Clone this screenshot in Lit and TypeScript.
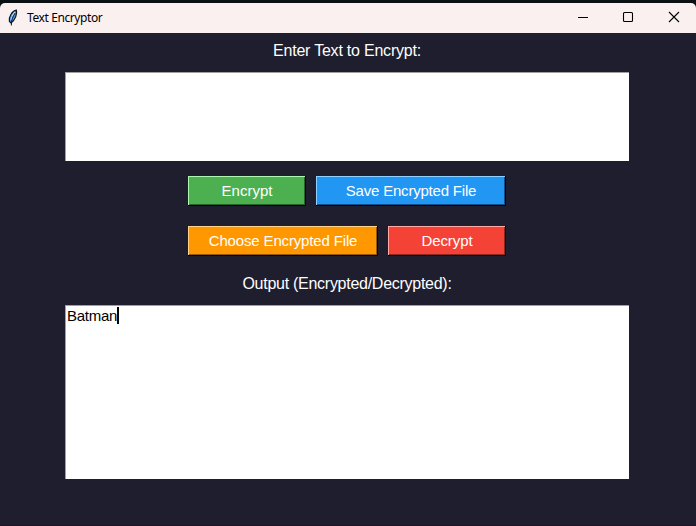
import { LitElement, html, css } from "lit";
import { customElement, property } from "lit/decorators.js";

@customElement("tk-titlebar")
class TkTitlebar extends LitElement {
  static styles = css`
    :host { display: flex; align-items: center; height: 30px; background: #faf0f0; border-radius: 5px 5px 0 0; color: #000; overflow: hidden; }
    .feather { width: 14px; height: 18px; margin-left: 6px; margin-bottom: 1px; }
    .name { flex: 1; margin-left: 7px; font: 12px/16px "Noto Sans", sans-serif; letter-spacing: -0.4px; }
    .controls { display: flex; height: 30px; margin-right: -1px; }
    .control { width: 46px; height: 28px; display: flex; justify-content: center; align-items: center; }
    .control.minimize { width: 44px; }
    .control svg { width: 12px; height: 12px; fill: none; stroke: #000; stroke-width: 1.1; }
  `;
  render() {
    return html`
      <svg class="feather" viewBox="0 0 14 18">
        <path d="M3.4 12.5C2.4 8 6 2 10.4 1.2C11.4 5 9.3 11 5 14Z" fill="#4e91dd" stroke="#101820" stroke-width="1.2" />
        <path d="M5 11C5.3 8 7 5 9 3" fill="none" stroke="#b7dcff" stroke-width="1.1" />
        <path d="M9.3 4C6.6 7.5 5.4 11 5.3 16.5" fill="none" stroke="#101820" stroke-width="1" />
      </svg>
      <span class="name">Text Encryptor</span>
      <div class="controls">
        <div class="control minimize"><svg viewBox="0 0 12 12"><path d="M1 6.5H11" /></svg></div>
        <div class="control"><svg viewBox="0 0 12 12"><rect x="1.5" y="1.5" width="9" height="9" rx="1" /></svg></div>
        <div class="control"><svg viewBox="0 0 12 12"><path d="M1 1L11 11M11 1L1 11" /></svg></div>
      </div>
    `;
  }
}

@customElement("tk-button")
class TkButton extends LitElement {
  @property({ reflect: true }) tone = "green";
  static styles = css`
    :host { --face: #4caf50; --light: #b0f5b2; --dark: #26672a; display: block; }
    :host([tone="blue"]) { --face: #2196f3; --light: #90d0ff; --dark: #11518b; letter-spacing: -0.2px; }
    :host([tone="orange"]) { --face: #ff9800; --light: #ffd38a; --dark: #965700; letter-spacing: -0.15px; }
    :host([tone="red"]) { --face: #f44336; --light: #ffaaa4; --dark: #93251d; letter-spacing: -0.1px; }
    .face {
      box-sizing: border-box; width: 100%; height: 30px; padding: 0; border: 0; background: var(--face); color: #fff;
      font: 15px/28px "Liberation Sans", Arial, sans-serif; letter-spacing: inherit; text-align: center; white-space: nowrap;
      box-shadow: inset -1px -1px #000, inset 1px 1px var(--light), inset -2px -2px var(--dark);
      display: block;
    }
  `;
  render() {
    return html`<button class="face"><slot></slot></button>`;
  }
}

@customElement("app-root")
class AppRoot extends LitElement {
  static styles = css`
    :host { display: block; box-sizing: border-box; height: 526px; padding-top: 3px; background: #0b1015; overflow: hidden; font-family: "Liberation Sans", Arial, sans-serif; }
    .body { box-sizing: border-box; height: 493px; background: #1e1e2e; border-bottom: 1px solid #21142a; display: flex; flex-direction: column; align-items: center; padding-right: 2px; }
    .label { color: #fff; font-size: 16px; line-height: 20px; margin-top: 8px; letter-spacing: -0.22px; }
    .area { box-sizing: border-box; width: 564px; background: #fff; border: solid #a0a0a0; border-width: 1px 0 0 1px; color: #000; font-size: 15px; line-height: 18px; padding: 1px; display: flex; letter-spacing: -0.25px; }
    .input { height: 89px; margin-top: 11px; }
    .output { height: 174px; margin-top: 11px; }
    .caret { width: 2px; height: 17px; background: #000; }
    .actions { display: grid; gap: 20px; width: 318px; margin-top: 15px; }
    .row { display: grid; gap: 10px; }
    .short-long { grid-template-columns: 118px 190px; }
    .long-short { grid-template-columns: 190px 118px; }
    .result { margin-top: 18px; letter-spacing: -0.27px; }
  `;
  render() {
    return html`
      <tk-titlebar></tk-titlebar>
      <main class="body">
        <div class="label">Enter Text to Encrypt:</div>
        <div class="area input"></div>
        <div class="actions">
          <div class="row short-long">
            <tk-button tone="green">Encrypt</tk-button>
            <tk-button tone="blue">Save Encrypted File</tk-button>
          </div>
          <div class="row long-short">
            <tk-button tone="orange">Choose Encrypted File</tk-button>
            <tk-button tone="red">Decrypt</tk-button>
          </div>
        </div>
        <div class="label result">Output (Encrypted/Decrypted):</div>
        <div class="area output"><span>Batman</span><span class="caret"></span></div>
      </main>
    `;
  }
}
